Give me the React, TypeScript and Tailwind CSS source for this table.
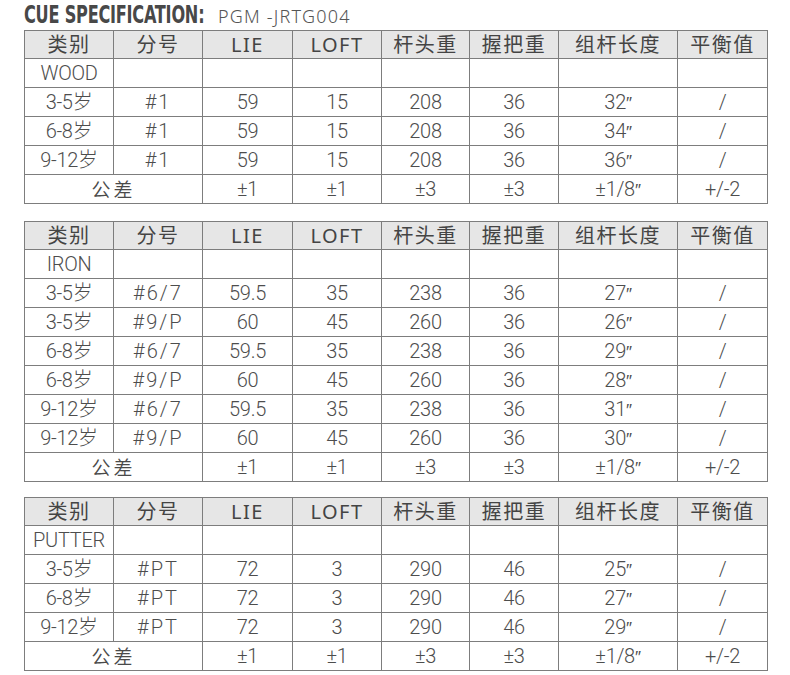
import type { ReactNode } from 'react'

const COLS = [89, 89, 90, 89, 88, 89, 119, 90]
const HEAD = ['类别', '分号', 'LIE', 'LOFT', '杆头重', '握把重', '组杆长度', '平衡值']
const TOL = ['±1', '±1', '±3', '±3', '±1/8″', '+/-2']

type Group = { name: string; rows: string[][] }

const groups: Group[] = [
  {
    name: 'WOOD',
    rows: [
      ['3-5岁', '#1', '59', '15', '208', '36', '32″', '/'],
      ['6-8岁', '#1', '59', '15', '208', '36', '34″', '/'],
      ['9-12岁', '#1', '59', '15', '208', '36', '36″', '/'],
    ],
  },
  {
    name: 'IRON',
    rows: [
      ['3-5岁', '#6/7', '59.5', '35', '238', '36', '27″', '/'],
      ['3-5岁', '#9/P', '60', '45', '260', '36', '26″', '/'],
      ['6-8岁', '#6/7', '59.5', '35', '238', '36', '29″', '/'],
      ['6-8岁', '#9/P', '60', '45', '260', '36', '28″', '/'],
      ['9-12岁', '#6/7', '59.5', '35', '238', '36', '31″', '/'],
      ['9-12岁', '#9/P', '60', '45', '260', '36', '30″', '/'],
    ],
  },
  {
    name: 'PUTTER',
    rows: [
      ['3-5岁', '#PT', '72', '3', '290', '46', '25″', '/'],
      ['6-8岁', '#PT', '72', '3', '290', '46', '27″', '/'],
      ['9-12岁', '#PT', '72', '3', '290', '46', '29″', '/'],
    ],
  },
]

// inches mark: Roboto has no slanted double prime, so take it from DejaVu
function Value({ v }: { v: string }) {
  if (!v.endsWith('″')) return <>{v}</>
  return (
    <>
      {v.slice(0, -1)}
      <span className="font-['DejaVu_Sans',sans-serif] text-[17px] font-extralight">″</span>
    </>
  )
}

function Cell({ children, span, className = '' }: { children?: ReactNode; span?: number; className?: string }) {
  return (
    <td colSpan={span} className={`border border-[#7d7d7d] p-0 text-center align-middle ${className}`}>
      {children}
    </td>
  )
}

function SpecTable({ group }: { group: Group }) {
  return (
    <table className="w-[743px] table-fixed border-collapse">
      <colgroup>
        {COLS.map((w, i) => (
          <col key={i} style={{ width: w }} />
        ))}
      </colgroup>
      <thead>
        <tr className="h-[28px] bg-[#e6e6e6] font-['Noto_Sans','Noto_Sans_CJK_SC',sans-serif] text-[20px] leading-none tracking-[1.5px] text-[#444]">
          {HEAD.map((h) => (
            <Cell key={h}>{h}</Cell>
          ))}
        </tr>
      </thead>
      <tbody className="font-['Roboto','Noto_Sans_CJK_SC',sans-serif] text-[20px] leading-none font-light tracking-[-0.3px] text-[#4d4d4d]">
        <tr className="h-[29px]">
          <Cell>{group.name}</Cell>
          {COLS.slice(1).map((_, i) => (
            <Cell key={i} />
          ))}
        </tr>
        {group.rows.map((r, i) => (
          <tr key={i} className="h-[29px]">
            {r.map((v, j) => (
              <Cell key={j} className={j === 1 ? 'tracking-[2px]' : ''}>
                <Value v={v} />
              </Cell>
            ))}
          </tr>
        ))}
        <tr className="h-[29px]">
          <Cell span={2}>
            <span className="font-['Noto_Sans_CJK_SC',sans-serif] text-[19px] font-[350] tracking-[3px] text-[#4a4a4a]">公差</span>
          </Cell>
          {TOL.map((t, i) => (
            <Cell key={i}>
              <Value v={t} />
            </Cell>
          ))}
        </tr>
      </tbody>
    </table>
  )
}

export default function App() {
  return (
    <main className="min-h-[675px] w-[790px] bg-white pl-[24px]">
      <div className="flex h-[30px] items-center pt-[1px]">
        <div className="w-[194px] shrink-0">
          <h1 className="inline-block origin-left scale-x-[0.78] scale-y-[1.08] font-['DejaVu_Sans',sans-serif] text-[23px] leading-none font-bold font-stretch-condensed tracking-[-0.3px] whitespace-nowrap text-[#484848]">
            CUE SPECIFICATION:
          </h1>
        </div>
        <span className="font-['Noto_Sans',sans-serif] text-[18px] leading-none font-light tracking-[1.2px] text-[#555]">PGM -JRTG004</span>
      </div>
      <div className="flex flex-col">
        <SpecTable group={groups[0]} />
        <div className="h-[17px]" />
        <SpecTable group={groups[1]} />
        <div className="h-[15px]" />
        <SpecTable group={groups[2]} />
      </div>
    </main>
  )
}
